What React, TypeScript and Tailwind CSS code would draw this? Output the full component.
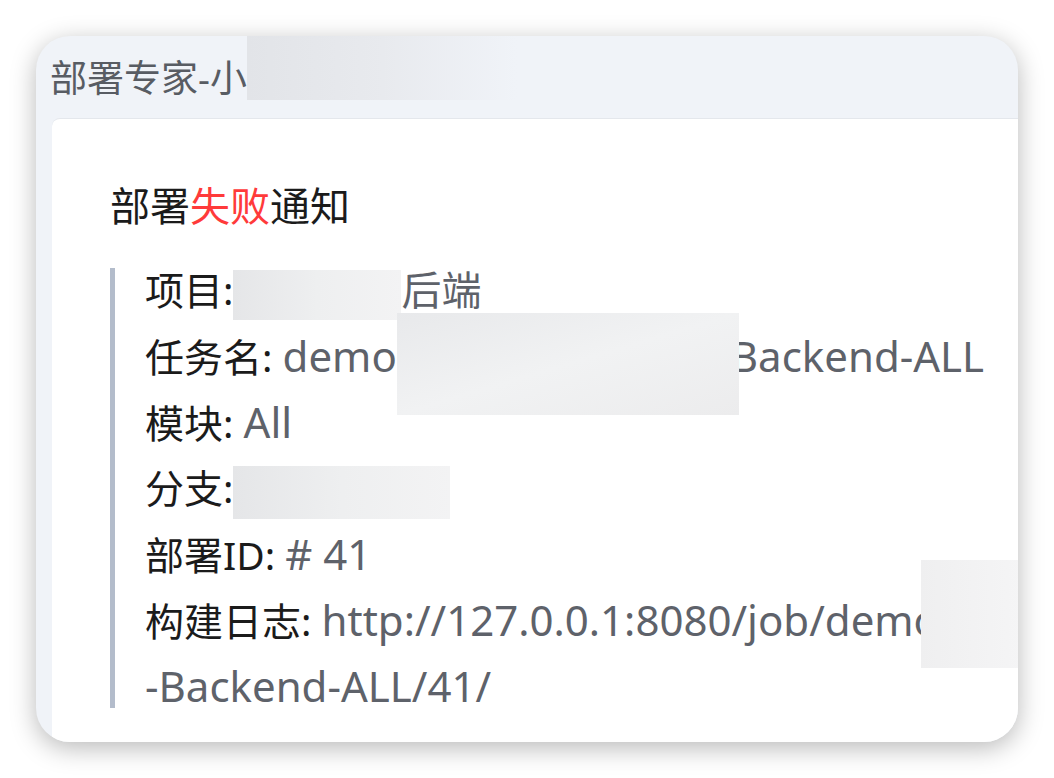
import React from 'react';

function Blur({ w, h, className = '' }: { w: number; h: number; className?: string }) {
  return (
    <span
      className={`inline-block align-middle bg-gradient-to-r from-[#e5e6e8] via-[#eeeff0] to-[#f3f3f4] ${className}`}
      style={{ width: w, height: h }}
    />
  );
}

function Row({ label, children }: { label: string; children?: React.ReactNode }) {
  return (
    <div className="leading-[44px] h-[44px] whitespace-nowrap">
      <span className="text-[#1b1b1b]">{label}</span>
      <span className="text-[#5e626a] text-[42px]">{children}</span>
    </div>
  );
}

export default function App() {
  return (
    <main className="min-h-screen bg-white pt-[36px] pl-[36px] font-['Noto_Sans','Noto_Sans_CJK_SC',sans-serif]">
      <div className="w-[982px] h-[706px] rounded-[34px] overflow-hidden bg-[#f0f3f8] shadow-[0_6px_26px_rgba(0,0,0,0.28)] flex flex-col">
        {/* header */}
        <div className="h-[82px] shrink-0 pl-[14px] flex items-start">
          <span className="mt-[19px] text-[37px] leading-[46px] text-[#585c63]">部署专家-小</span>
          <span className="w-[270px] h-[64px] bg-gradient-to-r from-[#e2e4e8] via-[#e8eaee] to-[#f0f3f8]" />
        </div>

        <div className="flex-1 pl-[16px]">
          <div className="relative h-full bg-white rounded-tl-[8px] border-t border-[#e4e7ec] pl-[58px] pt-[62px] overflow-hidden">
            <h1 className="text-[40px] leading-[50px] text-[#1b1b1b]">
              部署<span className="text-[#ff3a3a]">失败</span>通知
            </h1>

            <div className="mt-[37px] border-l-[5px] border-[#b3bccb] pl-[30px] flex flex-col gap-[22px] text-[39px]">
              <div className="leading-[44px] h-[44px] whitespace-nowrap">
                <span className="text-[#1b1b1b]">项目:</span>
                <Blur w={168} h={50} />
                <span className="text-[#5e626a] text-[40px]">后端</span>
              </div>
              <Row label="任务名: ">
                demo
                <span className="relative inline-block align-middle w-[334px] h-[44px]">
                  <span className="absolute left-0 right-[-8px] top-[-26px] h-[102px] bg-gradient-to-br from-[#e8e9eb] via-[#f1f2f3] to-[#ececed]" />
                </span>
                Backend-ALL
              </Row>
              <Row label="模块: ">All</Row>
              <div className="leading-[44px] h-[44px] whitespace-nowrap">
                <span className="text-[#1b1b1b]">分支:</span>
                <Blur w={217} h={53} />
              </div>
              <Row label="部署ID: "># 41</Row>
              <Row label="构建日志: ">http://127.0.0.1:8080/job/demo</Row>
              <div className="leading-[44px] h-[44px] text-[#5e626a] text-[42px] whitespace-nowrap">-Backend-ALL/41/</div>
            </div>

            {/* blurred tail of the log url */}
            <div className="absolute left-[869px] top-[441px] w-[120px] h-[108px] bg-gradient-to-r from-[#efeff0] to-[#f6f6f7]" />
          </div>
        </div>
      </div>
    </main>
  );
}
